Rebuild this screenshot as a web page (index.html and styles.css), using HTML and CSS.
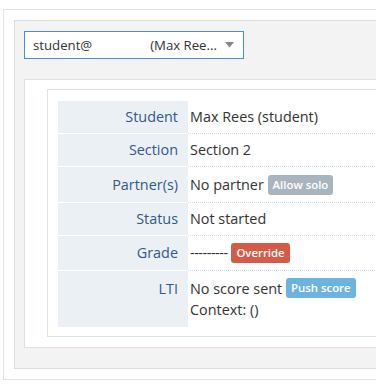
FILE: index.html
```html
<!DOCTYPE html>
<html>
<head>
<meta charset="utf-8">
<link rel="stylesheet" href="styles.css">
</head>
<body>
<div class="outer">
  <div class="panel">
    <div class="select">
      <span class="sel-text">student@</span><span class="redact"></span><span class="sel-text">(Max Ree...</span>
      <svg class="caret" width="9" height="6" viewBox="0 0 9 6"><path d="M0 0 H9 L4.5 5.5 Z" fill="#888"/></svg>
    </div>
    <div class="card">
      <div class="info">
        <div class="row"><div class="label">Student</div><div class="value">Max Rees (student)</div></div>
        <div class="row"><div class="label">Section</div><div class="value">Section 2</div></div>
        <div class="row partner"><div class="label">Partner(s)</div><div class="value">No partner <span class="badge gray">Allow solo</span></div></div>
        <div class="row"><div class="label">Status</div><div class="value">Not started</div></div>
        <div class="row grade"><div class="label">Grade</div><div class="value"><span class="dashes">---------</span> <span class="badge red">Override</span></div></div>
        <div class="row last"><div class="label">LTI</div><div class="value">No score sent <span class="badge blue">Push score</span><br>Context: ()</div></div>
      </div>
    </div>
  </div>
</div>
</body>
</html>
```

FILE: styles.css
```css
html, body {
  margin: 0;
  padding: 0;
  background: #fff;
  overflow: hidden;
  font-family: "Open Sans", "Liberation Sans", sans-serif;
  font-size: 14.4px;
  color: #333;
}
.outer {
  margin: 9px 0 0 3px;
  width: 600px;
  border: 1px solid #e3e3e3;
  background: #fff;
  padding: 10px 0 10px 10px;
}
.panel {
  border: 1px solid #dedede;
  background: #f3f3f3;
  padding: 10px 0 20px 9px;
}
.select {
  box-sizing: border-box;
  width: 220px;
  height: 28px;
  border: 1px solid #4a8fd3;
  background: #fff;
  display: flex;
  align-items: center;
  padding: 0 9px 0 8px;
  font-size: 13.2px;
  line-height: 20px;
  white-space: nowrap;
}
.redact {
  display: inline-block;
  flex: none;
  width: 58px;
}
.caret {
  margin-left: auto;
  flex: none;
}
.card {
  margin-top: 20px;
  border: 1px solid #e0e0e0;
  background: #fff;
  padding: 9px 0 10px 22px;
}
.info {
  border: 1px solid #d8e5f1;
  padding: 11px 0 9px 10px;
}
.row {
  display: flex;
}
.label {
  width: 130px;
  flex: none;
  box-sizing: border-box;
  background: #ebf0f4;
  color: #33578a;
  text-align: right;
  padding: 6px 10px 6px 0;
  line-height: 20px;
  border-bottom: 1px solid #fff;
}
.value {
  flex: 1;
  padding: 6px 0 6px 2px;
  line-height: 20px;
  white-space: nowrap;
  border-bottom: 1px dotted #c9dcec;
}
.dashes {
  letter-spacing: -0.45px;
}
.row.partner .label,
.row.partner .value {
  padding-top: 8px;
  padding-bottom: 7px;
}
.row.grade .label,
.row.grade .value {
  padding-top: 7px;
  padding-bottom: 7px;
}
.row.last .label,
.row.last .value {
  border-bottom: none;
  padding-top: 7px;
  padding-bottom: 7px;
  line-height: 21px;
}
.badge {
  display: inline-block;
  height: 20px;
  line-height: 20px;
  padding: 0 5px;
  border-radius: 3px;
  color: #fff;
  font-size: 11.4px;
  font-weight: 600;
  vertical-align: top;
}
.badge.gray { background: #a9b5be; }
.badge.red { background: #d55a47; }
.badge.blue { background: #6cb3e0; }
```
